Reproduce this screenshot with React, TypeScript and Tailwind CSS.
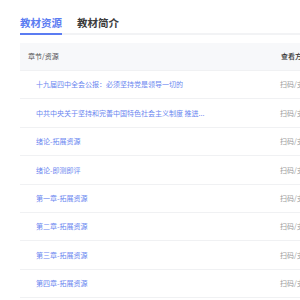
import React from "react";

const rows = [
  "十九届四中全会公报：必须坚持党是领导一切的",
  "中共中央关于坚持和完善中国特色社会主义制度 推进...",
  "绪论-拓展资源",
  "绪论-即测即评",
  "第一章-拓展资源",
  "第二章-拓展资源",
  "第三章-拓展资源",
  "第四章-拓展资源",
];

export default function App() {
  return (
    <div
      className="w-[300px] h-[300px] overflow-hidden bg-white"
      style={{ fontFamily: '"Noto Sans CJK SC", "Noto Sans", sans-serif' }}
    >
      <div className="pl-[20px]">
        <div className="flex gap-[15px] pt-[16px] border-b-2 border-[#f2f3f5] w-[400px]">
          <div className="text-[10.5px] leading-[14px] font-bold text-[#5b7cf2] pb-[3px] border-b-2 border-[#5b7cf2] -mb-[2px]">
            教材资源
          </div>
          <div className="text-[10.5px] leading-[14px] font-bold text-[#3a3a3a] pb-[3px]">
            教材简介
          </div>
        </div>
        <div className="mt-[8px] w-[400px]">
          <div className="flex items-center h-[28px] bg-[#f7f8fa] border-b border-[#f0f1f3]">
            <div className="w-[260px] pl-[8px] text-[7px] text-[#555] whitespace-nowrap">章节/资源</div>
            <div className="pl-[1px] text-[7px] font-medium text-[#333] whitespace-nowrap">查看方式</div>
          </div>
          {rows.map((r, i) => (
            <div key={i} className="flex items-center h-[28.4px] border-b border-[#f0f1f3]">
              <div className="w-[260px] pl-[16px] text-[7px] text-[#6a86f0] whitespace-nowrap">{r}</div>
              <div className="text-[7px] text-[#9a9a9a] whitespace-nowrap">扫码/支付</div>
            </div>
          ))}
        </div>
      </div>
    </div>
  );
}
